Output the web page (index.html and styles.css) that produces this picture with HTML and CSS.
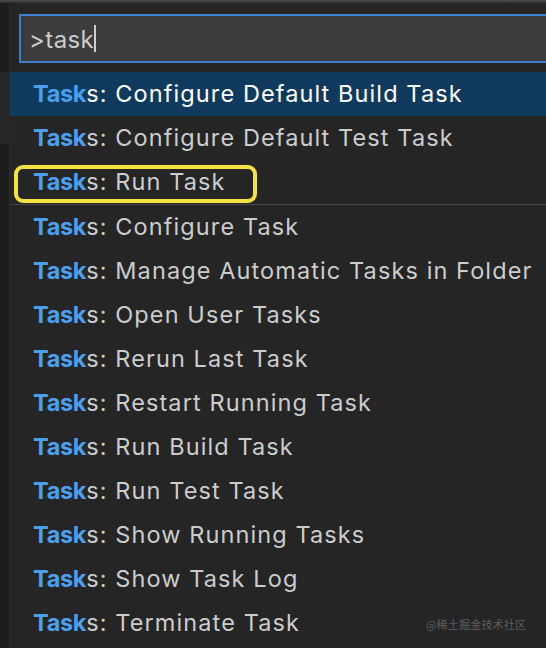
FILE: index.html
```html
<!DOCTYPE html>
<html lang="en">
<head>
<meta charset="utf-8">
<link rel="stylesheet" href="styles.css">
</head>
<body>
<div class="topbar"></div>
<div class="screen">
  <div class="gutter"><div class="gutter-hl"></div></div>
  <div class="panel">
    <div class="input"><span class="query">&gt;task</span><span class="caret"></span></div>
    <ul class="list">
      <li class="row active"><b>Task</b>s: Configure Default Build Task</li>
      <li class="row"><b>Task</b>s: Configure Default Test Task</li>
      <li class="row marked"><b>Task</b>s: Run Task<span class="callout"></span></li>
      <li class="sep"></li>
      <li class="row"><b>Task</b>s: Configure Task</li>
      <li class="row"><b>Task</b>s: Manage Automatic Tasks in Folder</li>
      <li class="row"><b>Task</b>s: Open User Tasks</li>
      <li class="row"><b>Task</b>s: Rerun Last Task</li>
      <li class="row"><b>Task</b>s: Restart Running Task</li>
      <li class="row"><b>Task</b>s: Run Build Task</li>
      <li class="row"><b>Task</b>s: Run Test Task</li>
      <li class="row"><b>Task</b>s: Show Running Tasks</li>
      <li class="row"><b>Task</b>s: Show Task Log</li>
      <li class="row"><b>Task</b>s: Terminate Task<span class="watermark">@稀土掘金技术社区</span></li>
    </ul>
  </div>
</div>
</body>
</html>
```

FILE: styles.css
```css
html, body {
  margin: 0;
  padding: 0;
  background: #252526;
  overflow: hidden;
}
body {
  width: 546px;
  height: 648px;
  font-family: Inter, "Noto Sans", sans-serif;
}
.topbar {
  height: 3px;
  background: linear-gradient(#4d4d4d, #2e2e2e);
}
.screen {
  display: flex;
  height: 645px;
}
.gutter {
  width: 9px;
  flex: none;
  background: #1d1d1d;
  padding-top: 69px;
  box-sizing: border-box;
}
.gutter-hl {
  height: 72px;
  background: #262626;
}
.panel {
  flex: 1;
  min-width: 0;
  background: #252526;
  border-left: 1px solid #2a2a2a;
  padding-top: 11px;
  overflow: hidden;
}
.input {
  margin-left: 9px;
  width: 560px;
  height: 45px;
  border: 2px solid #3d7fcb;
  background: #3c3c3c;
  display: flex;
  align-items: center;
  padding-left: 8px;
  box-sizing: content-box;
}
.query {
  color: #cccccc;
  font-size: 24px;
  letter-spacing: 0.4px;
  position: relative;
  top: 1px;
}
.caret {
  width: 1.5px;
  height: 27px;
  background: #cfcfcf;
  margin-left: 0;
}
.list {
  list-style: none;
  margin: 9px 0 0 0;
  padding: 0;
}
.row {
  position: relative;
  height: 44px;
  line-height: 44px;
  padding-left: 23px;
  color: #cccccc;
  font-size: 23.5px;
  white-space: nowrap;
  letter-spacing: 1.1px;
}
.row b {
  color: #4aa0ee;
  font-weight: 700;
  letter-spacing: -0.3px;
}
.row.active {
  background: #0f3a5e;
  color: #ffffff;
}
.sep {
  height: 1px;
  background: #454545;
}
.callout {
  position: absolute;
  left: 4px;
  top: 5px;
  width: 235px;
  height: 30px;
  border: 4px solid #f6e13d;
  border-radius: 9px;
}
.watermark {
  position: absolute;
  left: 416px;
  top: 1px;
  font-family: "Noto Sans CJK SC", sans-serif;
  font-size: 11px;
  letter-spacing: 0.2px;
  color: #5e5e5e;
}
```
